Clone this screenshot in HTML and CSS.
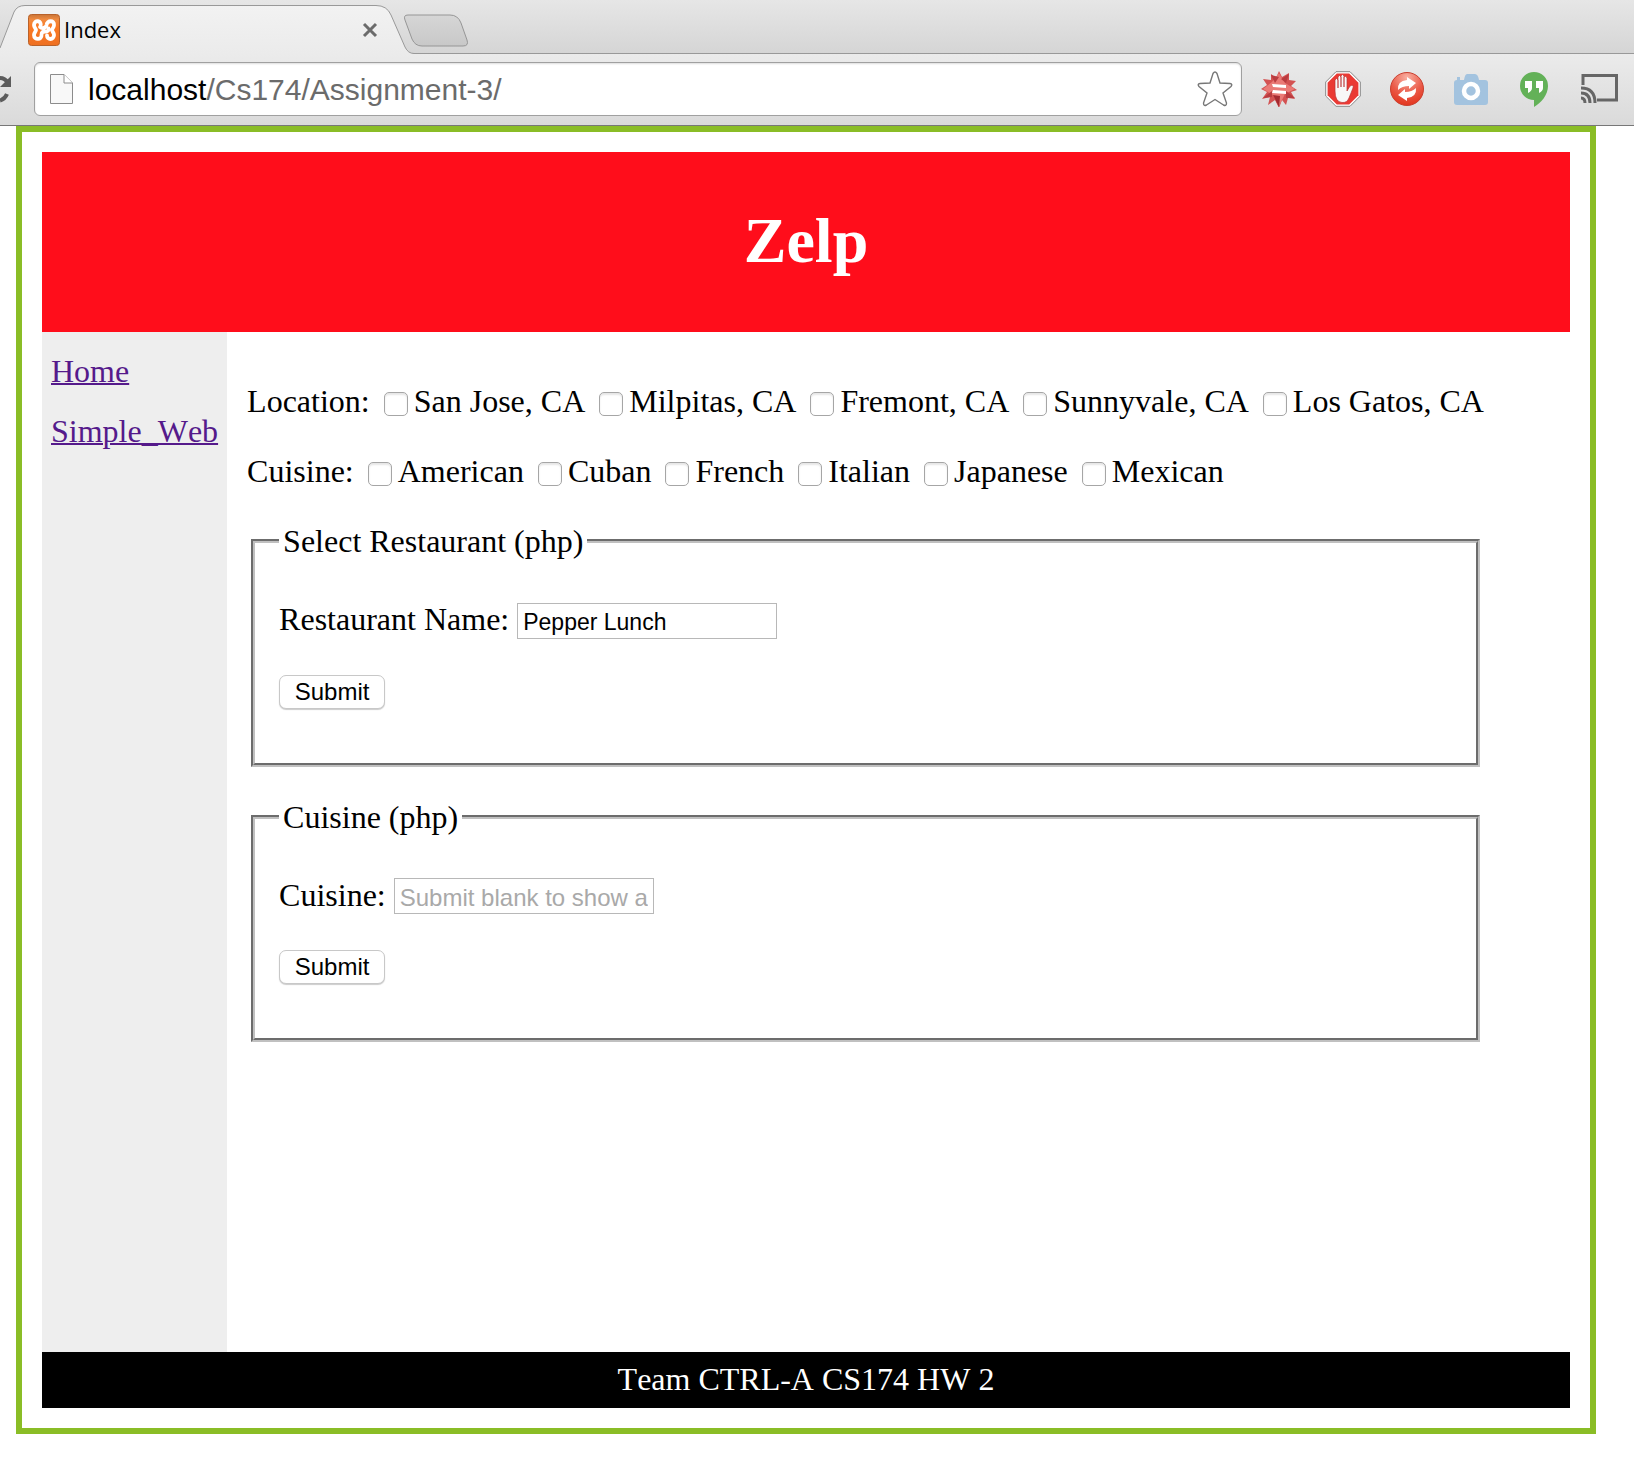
FILE: index.html
```html
<!DOCTYPE html>
<html lang="en">
<head>
<meta charset="utf-8">
<title>Index</title>
<link rel="stylesheet" href="styles.css">
</head>
<body>
<div class="browser">
  <div class="tabstrip">
    <div class="tab">
      <svg class="tab-shape" width="416" height="54" viewBox="0 0 416 54" aria-hidden="true">
        <defs><linearGradient id="tabfill" x1="0" y1="0" x2="0" y2="1"><stop offset="0" stop-color="#f2f2f2"/><stop offset="1" stop-color="#ebebeb"/></linearGradient></defs>
        <path d="M0 48L14 12Q17 5.500 25 5.500H376Q387 5.500 391 15L405 47Q408 53.500 414 53.500H416V54H0Z" fill="url(#tabfill)"/>
        <path d="M0 48L14 12Q17 5.500 25 5.500H376Q387 5.500 391 15L405 47Q408 53.500 414 53.500H416" fill="none" stroke="#999"/>
      </svg>
      <svg class="favicon" width="32" height="32" viewBox="0 0 32 32" aria-hidden="true">
        <defs><linearGradient id="fav" x1="0" y1="0" x2="0" y2="1"><stop offset="0" stop-color="#c97538"/><stop offset=".16" stop-color="#f08b40"/><stop offset=".4" stop-color="#fb7a24"/><stop offset="1" stop-color="#ee7022"/></linearGradient></defs>
        <rect x=".5" y=".5" width="31" height="31" rx="3" fill="url(#fav)" stroke="#b9622a"/>
        <path d="M12.500 12.500C14.500 6 6 5.500 6 11C6 14 8 14.500 8 16C8 17.500 6 18.500 6 21C6 26.500 14 26 13.500 21C13.500 18 15 17.500 17.500 17.500C20 17.500 21 16.500 20.500 14.500M12 13C14 15 18 14 18.500 11C19 6 26.500 6 26 11C26 14 24 14.500 24 16C24 17.500 26 18.500 26 21C26 26.500 19 26 19 21.500" fill="none" stroke="#fff" stroke-width="3.800" stroke-linejoin="round" stroke-linecap="round"/>
      </svg>
      <span class="tab-title">Index</span>
      <button class="tab-close" aria-label="Close tab"><svg width="16" height="16" viewBox="0 0 16 16"><path d="M2 2L14 14M14 2L2 14" stroke="#6b6b6b" stroke-width="3"/></svg></button>
    </div>
    <button class="new-tab" aria-label="New tab">
      <svg width="64" height="33" viewBox="0 0 64 33"><defs><linearGradient id="nt" x1="0" y1="0" x2="0" y2="1"><stop offset="0" stop-color="#d6d6d6"/><stop offset="1" stop-color="#c8c8c8"/></linearGradient></defs><path d="M4 1H46Q54 1 57 9L63 26Q65 32 59 32H18Q11 32 8 25L1 6Q-1 1 4 1Z" fill="url(#nt)" stroke="#969696"/></svg>
    </button>
  </div>
  <div class="toolbar">
    <svg class="reload" width="12" height="30" viewBox="0 0 12 30" aria-hidden="true"><path d="M0 4Q5 4 8 9M0 26.500Q5 25 7 20" fill="none" stroke="#5c5c5c" stroke-width="4"/><path d="M11 2V13H0Z" fill="#5c5c5c"/></svg>
    <div class="address">
      <svg width="23" height="30" viewBox="0 0 23 30" aria-hidden="true"><path d="M.5 .5H14L22.500 9V29.500H.5Z" fill="#f8f8f8" stroke="#8c8c8c"/><path d="M14 .5V9H22.500" fill="#fff" stroke="#8c8c8c"/></svg>
      <div class="url"><span class="host">localhost</span>/Cs174/Assignment-3/</div>
      <svg width="36" height="36" viewBox="0 0 36 36" aria-hidden="true"><path d="M16 2.500Q18 -.5 20 2.500L23 12L33 12.500Q36 13 34 15.500L26 22L29.500 32Q29.500 35.500 26.500 34L18 28.500L9.500 34Q6.500 35.500 6.500 32L10 22L2 15.500Q0 13 3 12.500L13 12Z" fill="#fff" stroke="#777" stroke-width="1.400"/></svg>
    </div>
    <div class="extensions">
      <svg width="36" height="36" viewBox="0 0 36 36" aria-hidden="true"><path d="M18 0L21 6L28 2L28 9L35 10L30 15L36 19L30 21L34 28L27 27L25 34L21 29L18 37L14 29L7 34L9 26L1 28L6 21L0 18L6 14L2 8L10 9L10 3L15 7Z" fill="#d35252"/><path d="M18 2L24 12L34 18L24 23L18 35L12 24L2 18L11 11Z" fill="#ea7a76"/><path d="M10 4L14 12L18 6ZM28 3L25 12L20 8ZM2 27L11 20V26ZM34 27L25 20V27Z" fill="#b93c40"/><path d="M12 24L18 36L19 25Z" fill="#a42a30"/><path d="M11 13L25 14V17L12 16ZM12 19L25 20V23L11 22Z" fill="#fff"/></svg>
      <svg width="36" height="36" viewBox="0 0 36 36" aria-hidden="true"><path d="M11 .7H25L35.300 11V25L25 35.300H11L.7 25V11Z" fill="#fff" stroke="#888"/><path d="M11.800 2.600H24.200L33.400 11.800V24.200L24.200 33.400H11.800L2.600 24.200V11.800Z" fill="#ea3a34"/><path d="M10 20V9Q11.500 6 13 9V17V6Q14.500 3 16 6V16V5Q17.500 2 19 5V16V6Q21 4 22 7V20L25 15Q29 13 28 17L24 27Q22 32 17 31.500Q10 31 10 20Z" fill="#f8f8f8" stroke="#b33" stroke-width=".7"/></svg>
      <svg width="36" height="36" viewBox="0 0 36 36" aria-hidden="true"><defs><radialGradient id="rd" cx=".5" cy=".15" r=".9"><stop offset="0" stop-color="#f9b0a2"/><stop offset=".55" stop-color="#ea5a48"/><stop offset="1" stop-color="#e23018"/></radialGradient></defs><circle cx="18" cy="18" r="16.500" fill="url(#rd)" stroke="#c94030"/><path d="M9 19Q8 10 18 9V6L27 12L20 18V15Q13 15 9 19ZM27 17Q28 26 18 27V30L9 24L16 18V21Q23 21 27 17Z" fill="#fff"/></svg>
      <svg width="36" height="36" viewBox="0 0 36 36" aria-hidden="true"><path d="M4 9V6H7V9H11Q12 3 14 3H22Q25 3 26 9H32Q35 9 35 12V31Q35 34 32 34H4Q1 34 1 31V12Q1 9 4 9Z" fill="#a3c3df"/><circle cx="18" cy="20" r="7" fill="none" stroke="#fff" stroke-width="4.500"/></svg>
      <svg width="36" height="36" viewBox="0 0 36 36" aria-hidden="true"><path d="M17 1A14 14 0 0 1 31 15C31 24 24 32 17 36V29A14 14 0 0 1 17 1Z" fill="#63b158"/><path d="M8 10H15V17Q15 20 11 22V17H8ZM19 10H26V17Q26 20 22 22V17H19Z" fill="#fff"/></svg>
      <svg width="38" height="36" viewBox="1 0 38 36" aria-hidden="true"><path d="M3 14V4.500H36.500V29H17" fill="none" stroke="#666" stroke-width="3"/><path d="M1 27Q5 27 5 32M1 22Q10 22 10 32M1 17Q15 17 15 32" fill="none" stroke="#666" stroke-width="3"/></svg>
    </div>
  </div>
</div>
<div class="page">
  <header class="banner"><h1>Zelp</h1></header>
  <div class="columns">
    <nav class="side">
      <a href="#home">Home</a>
      <a href="#simple">Simple_Web</a>
    </nav>
    <main class="main">
      <div class="filters">
        Location:
        <label><input type="checkbox" class="tick">San Jose, CA</label>
        <label><input type="checkbox" class="tick">Milpitas, CA</label>
        <label><input type="checkbox" class="tick">Fremont, CA</label>
        <label><input type="checkbox" class="tick">Sunnyvale, CA</label>
        <label><input type="checkbox" class="tick">Los Gatos, CA</label>
      </div>
      <div class="filters">
        Cuisine:
        <label><input type="checkbox" class="tick">American</label>
        <label><input type="checkbox" class="tick">Cuban</label>
        <label><input type="checkbox" class="tick">French</label>
        <label><input type="checkbox" class="tick">Italian</label>
        <label><input type="checkbox" class="tick">Japanese</label>
        <label><input type="checkbox" class="tick">Mexican</label>
      </div>
      <form>
        <fieldset class="group">
          <legend>Select Restaurant (php)</legend>
          <p><label for="restaurant">Restaurant Name:</label> <input class="field" id="restaurant" type="text" value="Pepper Lunch"></p>
          <p><button class="submit" type="submit">Submit</button></p>
        </fieldset>
      </form>
      <form>
        <fieldset class="group">
          <legend>Cuisine (php)</legend>
          <p><label for="cuisine">Cuisine:</label> <input class="field" id="cuisine" type="text" placeholder="Submit blank to show all"></p>
          <p><button class="submit" type="submit">Submit</button></p>
        </fieldset>
      </form>
    </main>
  </div>
  <footer class="footer">Team CTRL-A CS174 HW 2</footer>
</div>
</body>
</html>
```

FILE: styles.css
```css
* { box-sizing: border-box; }
body {
  margin: 0;
  background: #fff;
  color: #000;
  font: 32px/38px "Liberation Serif", "Times New Roman", serif;
  font-kerning: none;
}
button { font: inherit; padding: 0; border: 0; background: none; }
svg { display: block; flex: none; }

/* Browser chrome */
.browser {
  overflow: hidden;
  border-bottom: 1px solid #777;
  font-family: "Liberation Sans", Arial, sans-serif;
}
.tabstrip {
  display: flex;
  height: 54px;
  background: linear-gradient(#e6e6e6, #d5d5d5);
  box-shadow: inset 0 -1px #999;
}
.tab {
  position: relative;
  display: flex;
  align-items: center;
  flex: 0 1 416px;
  padding: 6px 38px 0 28px;
  gap: 4px;
}
.tab-shape { position: absolute; left: 0; top: 0; }
.favicon, .tab-title, .tab-close { position: relative; }
.tab-title { flex: 1; padding-bottom: 2px; font: 22px/28px "Open Sans", sans-serif; }
.new-tab { align-self: flex-start; margin: 14px 0 0 -12px; position: relative; }
.toolbar {
  display: flex;
  align-items: center;
  padding: 8px 15px 9px 0;
  background: linear-gradient(#ebebeb, #dadada);
}
.reload { margin-right: 22px; }
.address {
  flex: 1;
  display: flex;
  align-items: center;
  gap: 15px;
  height: 54px;
  padding: 0 8px 0 15px;
  border: 1px solid #a0a0a0;
  border-radius: 6px;
  background: #fff;
  box-shadow: inset 0 1px 2px #ddd;
}
.url { flex: 1; padding-top: 2px; color: #6b6b6b; font-size: 30px; line-height: 36px; }
.host { color: #000; }
.extensions { display: flex; gap: 28px; margin-left: 19px; }

/* Page */
.page { margin: 0 38px 26px 16px; padding: 20px; border: 6px solid #8abd26; }
.banner { padding: 51px 0 53px; background: #ff0d1b; color: #fff; text-align: center; }
.banner h1 { margin: 0; font-size: 64px; line-height: 76px; }
.columns { display: flex; min-height: 1020px; }
.side {
  display: flex;
  flex-direction: column;
  padding: 9px;
  background: #eee;
  line-height: 60px;
}
.side a { color: #551a8b; text-decoration-thickness: 2px; }
.main { padding: 50px 20px; }
.filters { margin-bottom: 32px; }
.filters label { white-space: nowrap; }
.tick {
  appearance: none;
  width: 24px;
  height: 24px;
  margin: 0 6px;
  border: 1px solid #a6a6a6;
  border-radius: 5px;
  background: #fff;
  box-shadow: inset 0 2px 2px #e6e6e6;
  vertical-align: -4px;
}
.group { margin: 0 4px 31px; padding: 9px 24px 22px; border: 4px groove #c0c0c0; }
.group legend { padding: 0 4px; }
.group p { margin: 32px 0; line-height: 36px; }
.field {
  width: 260px;
  height: 36px;
  padding: 4px 5px 0;
  border: 1px solid #b8b8b8;
  font: 23px "Liberation Sans", Arial, sans-serif;
  vertical-align: baseline;
}
.field::placeholder { color: #a9a9a9; font-size: 24px; }
.submit {
  width: 106px;
  height: 34px;
  border: 1px solid #c8c8c8;
  border-radius: 7px;
  background: #fff;
  box-shadow: 0 1px 1px #ccc;
  font: 24px "Liberation Sans", Arial, sans-serif;
}
.footer { padding: 8px 10px 10px; background: #000; color: #fff; text-align: center; }
```
